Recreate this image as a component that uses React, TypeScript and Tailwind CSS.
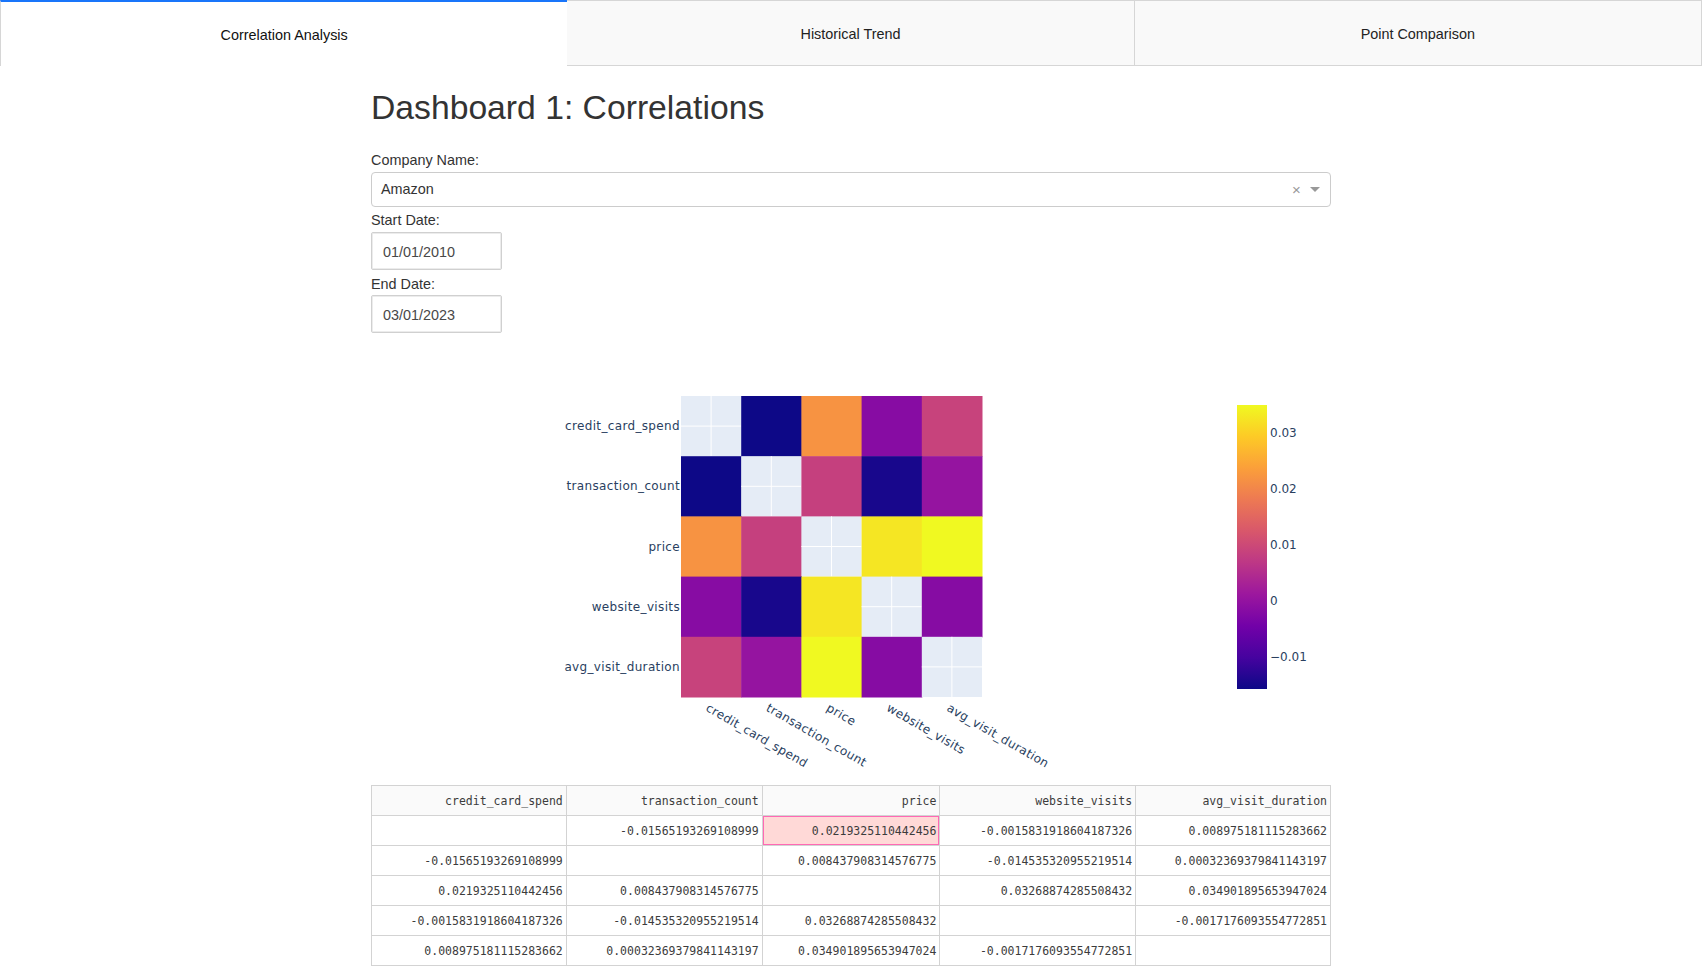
import React from "react";

// column names of the correlation matrix
const labels = [
  "credit_card_spend",
  "transaction_count",
  "price",
  "website_visits",
  "avg_visit_duration",
];

// correlation values as printed by the table (null = diagonal)
const matrix: (string | null)[][] = [
  [null, "-0.01565193269108999", "0.0219325110442456", "-0.0015831918604187326", "0.008975181115283662"],
  ["-0.01565193269108999", null, "0.008437908314576775", "-0.014535320955219514", "0.00032369379841143197"],
  ["0.0219325110442456", "0.008437908314576775", null, "0.03268874285508432", "0.034901895653947024"],
  ["-0.0015831918604187326", "-0.014535320955219514", "0.03268874285508432", null, "-0.0017176093554772851"],
  ["0.008975181115283662", "0.00032369379841143197", "0.034901895653947024", "-0.0017176093554772851", null],
];

const plasma = [
  "#0d0887", "#46039f", "#7201a8", "#9c179e", "#bd3786",
  "#d8576b", "#ed7953", "#fb9f3a", "#fdca26", "#f0f921",
];

const zmin = -0.01565193269108999;
const zmax = 0.034901895653947024;

const hexToRgb = (h: string) => [
  parseInt(h.slice(1, 3), 16),
  parseInt(h.slice(3, 5), 16),
  parseInt(h.slice(5, 7), 16),
];

// pick a colour off the plasma scale for a value
const colorFor = (v: number) => {
  const t = Math.min(1, Math.max(0, (v - zmin) / (zmax - zmin)));
  const pos = t * (plasma.length - 1);
  const i = Math.min(plasma.length - 2, Math.floor(pos));
  const f = pos - i;
  const a = hexToRgb(plasma[i]);
  const b = hexToRgb(plasma[i + 1]);
  const c = a.map((x, k) => Math.round(x + (b[k] - x) * f));
  return `rgb(${c[0]},${c[1]},${c[2]})`;
};

const colWidths = [195, 196, 178, 196, 195];

// Heatmap drawn as an svg, the way plotly renders it
const Heatmap = () => {
  const x0 = 310;
  const y0 = 63;
  const cell = 60.2;
  const cbX = 866;
  const cbY = 72;
  const cbH = 284;
  const tickY = (v: number) => cbY + ((zmax - v) / (zmax - zmin)) * cbH;
  const ticks: [number, string][] = [
    [0.03, "0.03"],
    [0.02, "0.02"],
    [0.01, "0.01"],
    [0, "0"],
    [-0.01, "\u22120.01"],
  ];

  return (
    <svg width={960} height={452} className="block font-['DejaVu_Sans',Verdana,sans-serif]">
      <defs>
        <linearGradient id="plasma" x1="0" y1="1" x2="0" y2="0">
          {plasma.map((c, i) => (
            <stop key={c} offset={i / (plasma.length - 1)} stopColor={c} />
          ))}
        </linearGradient>
      </defs>

      {/* cells */}
      {matrix.map((row, r) =>
        row.map((v, c) => {
          const x = x0 + c * cell;
          const y = y0 + r * cell;
          if (v === null) {
            return (
              <g key={`${r}-${c}`}>
                <rect x={x} y={y} width={cell} height={cell} fill="#e5ecf6" />
                <line x1={x + cell / 2} y1={y} x2={x + cell / 2} y2={y + cell} stroke="#fff" strokeWidth={1} />
                <line x1={x} y1={y + cell / 2} x2={x + cell} y2={y + cell / 2} stroke="#fff" strokeWidth={1} />
              </g>
            );
          }
          return <rect key={`${r}-${c}`} x={x} y={y} width={cell + 0.5} height={cell + 0.5} fill={colorFor(parseFloat(v))} />;
        })
      )}

      {/* y axis labels */}
      {labels.map((l, i) => (
        <text key={l} x={x0 - 1} y={y0 + i * cell + cell / 2 + 4} textAnchor="end" fontSize={12} letterSpacing={0.35} fill="#2a3f5f">
          {l}
        </text>
      ))}

      {/* x axis labels, tilted */}
      {labels.map((l, i) => (
        <g key={l} transform={`translate(${x0 + i * cell + cell / 2 - 1.5},369.5) rotate(30)`}>
          <text x={0} y={9} fontSize={12} letterSpacing={0.35} fill="#2a3f5f">
            {l}
          </text>
        </g>
      ))}

      {/* colour bar */}
      <rect x={cbX} y={cbY} width={30} height={cbH} fill="url(#plasma)" />
      {ticks.map(([v, t]) => (
        <text key={t} x={cbX + 33} y={tickY(v) + 4} fontSize={12} fill="#2a3f5f">
          {t}
        </text>
      ))}
    </svg>
  );
};

const App = () => {
  const tabs = ["Correlation Analysis", "Historical Trend", "Point Comparison"];

  return (
    <div className="w-[1702px] min-h-[978px] bg-white text-[#333] font-['Liberation_Sans',Arial,sans-serif]">
      {/* Tabs */}
      <div className="grid grid-cols-3 h-[66px]">
        {tabs.map((t, i) =>
          i === 0 ? (
            <div key={t} className="flex items-center justify-center pt-[4px] bg-white border-l border-[#d6d6d6] border-t-2 border-t-[#1975fa] text-[14.4px] text-[#111]">
              {t}
            </div>
          ) : (
            <div key={t} className="flex items-center justify-center pt-[3px] bg-[#f9f9f9] border border-l-0 border-[#d6d6d6] text-[14.4px] text-[#222]">
              {t}
            </div>
          )
        )}
      </div>

      <div className="mx-auto w-[960px]">
        <h1 className="mt-[23px] mb-[24px] text-[33.7px] leading-[37px] text-[#333]">Dashboard 1: Correlations</h1>

        {/* Company dropdown */}
        <div className="text-[14.4px] leading-[20px]">Company Name:</div>
        <div className="mt-[2px] h-[35px] flex items-center border border-[#ccc] rounded-[4px] bg-white">
          <span className="flex-1 pl-[9px] text-[14.4px] text-[#333]">Amazon</span>
          <span className="w-[17px] text-center text-[#999] text-[15px] leading-none">×</span>
          <span className="w-[25px] flex justify-center pr-[5px]">
            <span className="w-0 h-0 border-x-[5px] border-x-transparent border-t-[5px] border-t-[#999]" />
          </span>
        </div>

        {/* Start date */}
        <div className="mt-[3px] text-[14.4px] leading-[20px]">Start Date:</div>
        <div className="mt-[2px] w-[131px] h-[38px] flex items-center border border-[#d0d0d0] rounded-[2px] shadow-[inset_0_0_0_1px_#ececec] pl-[11px] pt-[3px] text-[14.4px] text-[#484848]">
          01/01/2010
        </div>

        {/* End date */}
        <div className="mt-[4px] text-[14.4px] leading-[20px]">End Date:</div>
        <div className="mt-[1px] w-[131px] h-[38px] flex items-center border border-[#d0d0d0] rounded-[2px] shadow-[inset_0_0_0_1px_#ececec] pl-[11px] pt-[3px] text-[14.4px] text-[#484848]">
          03/01/2023
        </div>

        <Heatmap />

        {/* Correlation table */}
        <div className="border-l border-t border-[#d3d3d3] font-['DejaVu_Sans_Mono',monospace] text-[11.5px] text-[#3c3c3c]">
          <div className="flex bg-[#fafafa]">
            {labels.map((l, i) => (
              <div key={l} style={{ width: colWidths[i] }} className="h-[30px] flex items-center justify-end pr-[3px] pt-[2px] border-r border-b border-[#d3d3d3]">
                {l}
              </div>
            ))}
          </div>
          {matrix.map((row, r) => (
            <div key={r} className="flex bg-white">
              {row.map((v, c) => {
                const active = r === 0 && c === 2;
                return (
                  <div
                    key={c}
                    style={{ width: colWidths[c] }}
                    className={
                      active
                        ? "h-[30px] flex items-center justify-end pr-[3px] pt-[2px] border-r border-b border-[#d3d3d3] bg-[#ffd9d7] shadow-[inset_0_0_0_1px_#ff69b4]"
                        : "h-[30px] flex items-center justify-end pr-[3px] pt-[2px] border-r border-b border-[#d3d3d3]"
                    }
                  >
                    {v ?? ""}
                  </div>
                );
              })}
            </div>
          ))}
        </div>
      </div>
    </div>
  );
};

export default App;
